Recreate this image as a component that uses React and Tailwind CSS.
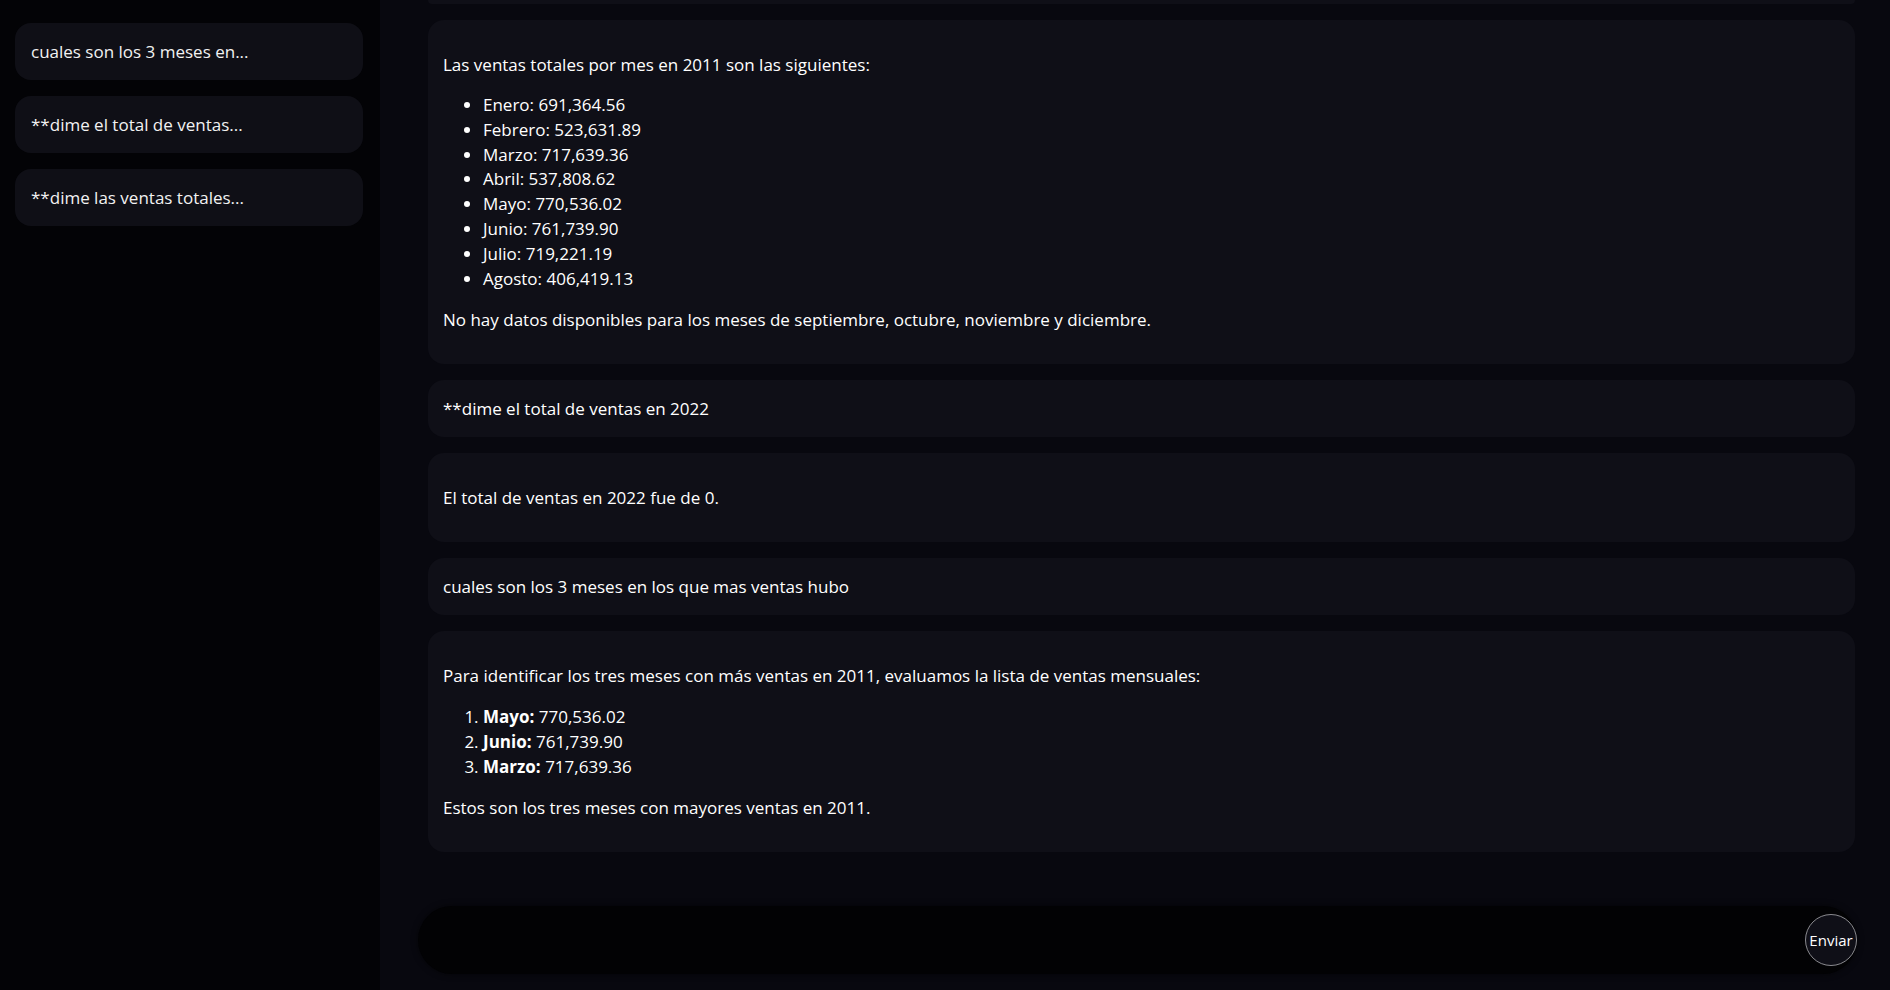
import React, { useState } from 'react';

const chats = [
  'cuales son los 3 meses en...',
  '**dime el total de ventas...',
  '**dime las ventas totales...',
];

const ventas2011 = [
  ['Enero', '691,364.56'],
  ['Febrero', '523,631.89'],
  ['Marzo', '717,639.36'],
  ['Abril', '537,808.62'],
  ['Mayo', '770,536.02'],
  ['Junio', '761,739.90'],
  ['Julio', '719,221.19'],
  ['Agosto', '406,419.13'],
];

const top3 = [
  ['Mayo', '770,536.02'],
  ['Junio', '761,739.90'],
  ['Marzo', '717,639.36'],
];

const UserMsg = ({ children }) => (
  <div className="bg-[#0f0f17] rounded-2xl px-[15px] py-4 leading-[25px]">{children}</div>
);

const BotMsg = ({ children }) => (
  <div className="bg-[#0f0f17] rounded-2xl px-[15px] py-4 leading-[25px]">{children}</div>
);

const App = () => {
  const [input, setInput] = useState('');

  return (
    <div
      className="flex h-[990px] w-full overflow-hidden bg-[#08080f] text-white text-[17px]"
      style={{ fontFamily: '"Open Sans", sans-serif' }}
    >
      {/* sidebar */}
      <aside className="w-[380px] shrink-0 bg-[#030306] pt-[23px] pl-[15px] pr-[17px] flex flex-col gap-4">
        {chats.map((c, i) => (
          <div
            key={i}
            className="h-[57px] rounded-2xl bg-[#0f0f16] flex items-center px-4 font-medium text-[#f2f2f2]"
          >
            {c}
          </div>
        ))}
      </aside>

      {/* main */}
      <main className="flex-1 flex flex-col min-w-0">
        <div className="flex-1 overflow-hidden pl-12 pr-[35px] flex flex-col gap-4">
          <div className="h-1 shrink-0 bg-[#0f0f17] rounded-b-2xl" />

          <BotMsg>
            <p className="my-4">Las ventas totales por mes en 2011 son las siguientes:</p>
            <ul className="list-disc pl-10 my-4 leading-[24.8px]">
              {ventas2011.map(([m, v]) => (
                <li key={m}>
                  {m}: {v}
                </li>
              ))}
            </ul>
            <p className="my-4">
              No hay datos disponibles para los meses de septiembre, octubre, noviembre y diciembre.
            </p>
          </BotMsg>

          <UserMsg>**dime el total de ventas en 2022</UserMsg>

          <BotMsg>
            <p className="my-4">El total de ventas en 2022 fue de 0.</p>
          </BotMsg>

          <UserMsg>cuales son los 3 meses en los que mas ventas hubo</UserMsg>

          <BotMsg>
            <p className="my-4">
              Para identificar los tres meses con más ventas en 2011, evaluamos la lista de ventas mensuales:
            </p>
            <ol className="list-decimal pl-10 my-4">
              {top3.map(([m, v]) => (
                <li key={m}>
                  <strong className="font-bold">{m}:</strong> {v}
                </li>
              ))}
            </ol>
            <p className="my-4">Estos son los tres meses con mayores ventas en 2011.</p>
          </BotMsg>
        </div>

        {/* input */}
        <div className="shrink-0 pl-[38px] pr-[33px] pt-[52px] pb-4">
          <div className="h-[68px] rounded-full bg-[#020204] flex items-center pl-6 shadow-[0_0_6px_rgba(0,0,0,0.6)]">
            <input
              value={input}
              onChange={(e) => setInput(e.target.value)}
              className="flex-1 bg-transparent outline-none text-white"
            />
            <button className="w-[52px] h-[52px] shrink-0 rounded-full border border-[#8a8a8f] bg-[#0f0f17] text-white text-[15px] font-medium flex items-center justify-center">
              Enviar
            </button>
          </div>
        </div>
      </main>
    </div>
  );
};

export default App;
